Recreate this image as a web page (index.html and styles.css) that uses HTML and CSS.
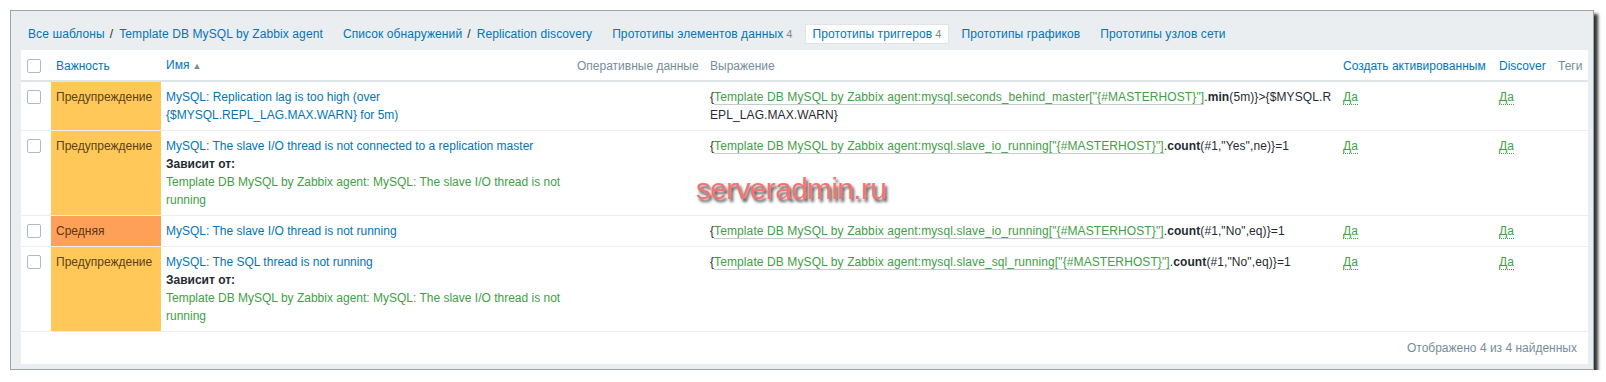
FILE: index.html
```html
<!DOCTYPE html>
<html lang="ru">
<head>
    <meta charset="UTF-8">
    <title>Прототипы триггеров</title>
    <link rel="stylesheet" href="styles.css">
</head>
<body>

<div class="page">
    <div class="panel">
        <!-- Breadcrumbs and tabs -->
        <ul class="nav">
            <li><a href="#">Все шаблоны</a><span class="sep">/</span><a href="#">Template DB MySQL by Zabbix agent</a></li>
            <li><a href="#">Список обнаружений</a><span class="sep">/</span><a href="#">Replication discovery</a></li>
            <li><a href="#">Прототипы элементов данных</a><span class="count">4</span></li>
            <li class="selected"><a href="#">Прототипы триггеров</a><span class="count">4</span></li>
            <li><a href="#">Прототипы графиков</a></li>
            <li><a href="#">Прототипы узлов сети</a></li>
        </ul>

        <div class="list-box">
            <table class="list">
                <colgroup>
                    <col class="c-check">
                    <col class="c-sev">
                    <col class="c-name">
                    <col class="c-opdata">
                    <col class="c-expr">
                    <col class="c-status">
                    <col class="c-disc">
                    <col class="c-tags">
                </colgroup>
                <thead>
                    <tr>
                        <th><span class="cb"></span></th>
                        <th><a href="#">Важность</a></th>
                        <th><a href="#">Имя</a><span class="arrow">&#9650;</span></th>
                        <th class="muted">Оперативные данные</th>
                        <th class="muted">Выражение</th>
                        <th><a href="#">Создать активированным</a></th>
                        <th><a href="#">Discover</a></th>
                        <th class="muted">Теги</th>
                    </tr>
                </thead>
                <tbody>
                    <tr>
                        <td><span class="cb"></span></td>
                        <td class="warning">Предупреждение</td>
                        <td><a href="#">MySQL: Replication lag is too high (over {$MYSQL.REPL_LAG.MAX.WARN} for 5m)</a></td>
                        <td></td>
                        <td class="expr">{<a class="alt" href="#">Template DB MySQL by Zabbix agent:mysql.seconds_behind_master["{#MASTERHOST}"]</a>.<b>min</b>(5m)}&gt;{$MYSQL.REPL_LAG.MAX.WARN}</td>
                        <td><a class="yes" href="#">Да</a></td>
                        <td><a class="yes" href="#">Да</a></td>
                        <td></td>
                    </tr>
                    <tr>
                        <td><span class="cb"></span></td>
                        <td class="warning">Предупреждение</td>
                        <td>
                            <a href="#">MySQL: The slave I/O thread is not connected to a replication master</a>
                            <div class="deps">Зависит от:</div>
                            <div class="dep">Template DB MySQL by Zabbix agent: MySQL: The slave I/O thread is not running</div>
                        </td>
                        <td></td>
                        <td class="expr">{<a class="alt" href="#">Template DB MySQL by Zabbix agent:mysql.slave_io_running["{#MASTERHOST}"]</a>.<b>count</b>(#1,"Yes",ne)}=1</td>
                        <td><a class="yes" href="#">Да</a></td>
                        <td><a class="yes" href="#">Да</a></td>
                        <td></td>
                    </tr>
                    <tr>
                        <td><span class="cb"></span></td>
                        <td class="average">Средняя</td>
                        <td><a href="#">MySQL: The slave I/O thread is not running</a></td>
                        <td></td>
                        <td class="expr">{<a class="alt" href="#">Template DB MySQL by Zabbix agent:mysql.slave_io_running["{#MASTERHOST}"]</a>.<b>count</b>(#1,"No",eq)}=1</td>
                        <td><a class="yes" href="#">Да</a></td>
                        <td><a class="yes" href="#">Да</a></td>
                        <td></td>
                    </tr>
                    <tr>
                        <td><span class="cb"></span></td>
                        <td class="warning">Предупреждение</td>
                        <td>
                            <a href="#">MySQL: The SQL thread is not running</a>
                            <div class="deps">Зависит от:</div>
                            <div class="dep">Template DB MySQL by Zabbix agent: MySQL: The slave I/O thread is not running</div>
                        </td>
                        <td></td>
                        <td class="expr">{<a class="alt" href="#">Template DB MySQL by Zabbix agent:mysql.slave_sql_running["{#MASTERHOST}"]</a>.<b>count</b>(#1,"No",eq)}=1</td>
                        <td><a class="yes" href="#">Да</a></td>
                        <td><a class="yes" href="#">Да</a></td>
                        <td></td>
                    </tr>
                </tbody>
            </table>
            <div class="paging">Отображено 4 из 4 найденных</div>
        </div>

        <!-- Site watermark over the table -->
        <div class="watermark">serveradmin.ru</div>
    </div>
</div>

</body>
</html>
```

FILE: styles.css
```css
body {
    margin: 0;
    background-color: #ffffff;
    font-family: "Liberation Sans", Arial, sans-serif;
    font-size: 12px;
    line-height: 18px;
    color: #1f2c33;
}
a {
    color: #0275b8;
    text-decoration: none;
}
.page {
    padding: 10px 0 0 10px;
}
.panel {
    position: relative;
    box-sizing: border-box;
    width: 1584px;
    padding: 0 5px 5px 10px;
    background-color: #ebeef0;
    border: 1px solid #9ea4a8;
    box-shadow: 4px 4px 3px rgba(0, 0, 0, 0.8);
}

/* Navigation */
.nav {
    display: flex;
    list-style: none;
    margin: 0;
    padding: 13px 0 6px 0;
    letter-spacing: 0.1px;
}
.nav li {
    padding: 0 6px;
    margin-right: 6px;
    border: 1px solid transparent;
    white-space: nowrap;
}
.nav li.selected {
    background-color: #ffffff;
    border-color: #dfe4e7;
}
.nav .sep {
    color: #1f2c33;
    margin: 0 6px 0 5px;
}
.nav .count {
    color: #768d99;
    font-size: 11px;
    margin-left: 3px;
}

/* Table */
.list-box {
    background-color: #ffffff;
}
.list {
    width: 1567px;
    table-layout: fixed;
    border-collapse: collapse;
}
.c-check { width: 30px; }
.c-sev { width: 110px; }
.c-name { width: 411px; }
.c-opdata { width: 133px; }
.c-expr { width: 633px; }
.c-status { width: 156px; }
.c-disc { width: 59px; }
.c-tags { width: 35px; }

.list th {
    padding: 6px 5px 5px 5px;
    border-bottom: 2px solid #dfe4e7;
    font-weight: normal;
    text-align: left;
    white-space: nowrap;
}
.list td {
    padding: 6px 5px;
    border-bottom: 1px solid #ebeef0;
    vertical-align: top;
}
.list th:first-child, .list td:first-child {
    padding-left: 6px;
    padding-right: 4px;
}
.list th.muted {
    color: #768d99;
}
.list .arrow {
    color: #768d99;
    font-size: 9px;
    margin-left: 3px;
}
.cb {
    display: inline-block;
    box-sizing: border-box;
    width: 14px;
    height: 14px;
    margin-top: 2px;
    vertical-align: top;
    background-color: #ffffff;
    border: 1px solid #acbbc2;
    border-radius: 2px;
}
.list td.warning {
    background-color: #ffc859;
    color: #5a4214;
}
.list td.average {
    background-color: #ffa059;
    color: #5a3514;
}
.deps {
    font-weight: bold;
}
.dep {
    color: #429e47;
}
.expr {
    word-break: break-all;
    letter-spacing: 0.1px;
}
.expr .alt {
    color: #429e47;
    border-bottom: 1px solid #c6ccce;
}
.yes {
    color: #429e47;
    border-bottom: 1px dotted #429e47;
}
.paging {
    padding: 7px 11px 7px 0;
    text-align: right;
    color: #768d99;
}

/* Watermark */
.watermark {
    position: absolute;
    left: 685px;
    top: 163px;
    font-size: 30px;
    line-height: 30px;
    letter-spacing: -0.7px;
    color: #f37474;
    text-shadow: 2px 3px 3px rgba(30, 30, 30, 0.8);
}
```
